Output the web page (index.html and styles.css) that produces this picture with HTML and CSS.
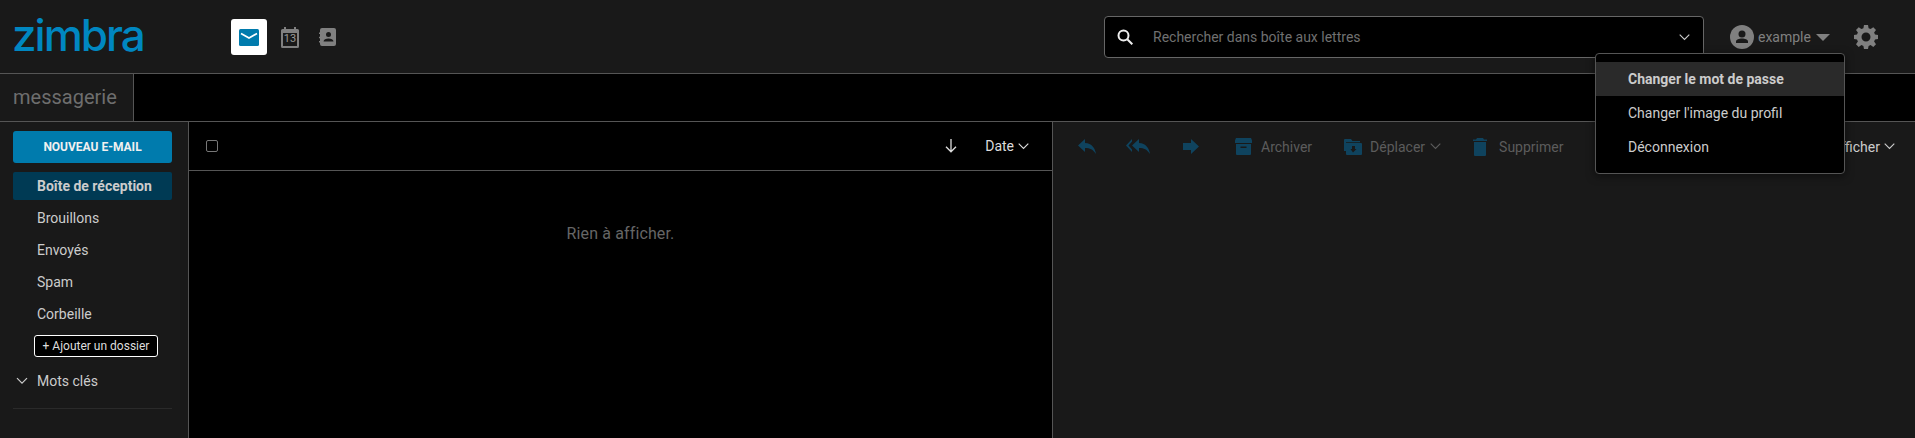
FILE: index.html
```html
<!DOCTYPE html>
<html lang="fr">
<head>
<meta charset="utf-8">
<title>Zimbra</title>
<link rel="stylesheet" href="styles.css">
</head>
<body>
<div class="app">
  <header class="topbar">
    <div class="logo">zimbra</div>
    <nav class="apps">
      <a class="app-btn active"><svg width="20" height="17" viewBox="0 0 20 17"><rect width="20" height="17" rx="1.500" fill="#007bad"/><path d="M2 4.500 10 9l8-4.500" fill="none" stroke="#fff" stroke-width="1.700"/></svg></a>
      <a class="app-btn cal"><svg width="18" height="21" viewBox="0 0 18 21"><path d="M3 0h2v2h8V0h2v2h1.500A1.500 1.500 0 0 1 18 3.500v16a1.500 1.500 0 0 1-1.500 1.500h-15A1.500 1.500 0 0 1 0 19.500v-16A1.500 1.500 0 0 1 1.500 2H3z" fill="#808080"/><rect x="2" y="6" width="14" height="13" fill="#191919"/></svg><span class="cal-num">13</span></a>
      <a class="app-btn contacts"><svg width="17" height="18" viewBox="0 0 17 18"><path d="M3 0h12a2 2 0 0 1 2 2v14a2 2 0 0 1-2 2H3a2 2 0 0 1-2-2v-1.500H0V13h1v-2.700H0V8.800h1V6H0V4.500h1V2a2 2 0 0 1 2-2z" fill="#808080"/><circle cx="9.500" cy="6.500" r="2.500" fill="#191919"/><path d="M4.500 13.500c0-2 2.500-3 5-3s5 1 5 3z" fill="#191919"/></svg></a>
    </nav>
    <div class="search">
      <svg class="search-ico" width="16" height="16" viewBox="0 0 16 16"><circle cx="6.500" cy="6.500" r="5" fill="none" stroke="#eee" stroke-width="2"/><path d="m10.300 10.300 5 5" stroke="#eee" stroke-width="2"/></svg>
      <span class="search-text">Rechercher dans boîte aux lettres</span>
      <svg class="chev-search" width="11" height="7" viewBox="0 0 11 7"><path d="m.7.700 4.800 4.800L10.300.7" fill="none" stroke="#ccc" stroke-width="1.100"/></svg>
    </div>
    <div class="user">
      <svg width="24" height="24" viewBox="0 0 24 24"><circle cx="12" cy="12" r="12" fill="#808080"/><circle cx="12" cy="9" r="3.500" fill="#191919"/><path d="M6 18v-1.500c0-2 3-3 6-3s6 1 6 3V18z" fill="#191919"/></svg>
      <span class="user-name">example</span>
      <span class="caret"></span>
    </div>
    <svg class="gear" width="24" height="24" viewBox="0 0 24 24"><path fill="#808080" fill-rule="evenodd" d="M10 0h4l.6 3.200 2 .8L19.300 2.200 22 4.900 20.100 7.500l.9 2L24 10v4l-3 .6-.9 2L22 19.300 19.300 22l-2.700-1.900-2 .9L14 24h-4l-.6-3-2-.9L4.700 22 2 19.300l1.900-2.700-.9-2L0 14v-4l3-.5.900-2L2 4.900 4.700 2.200 7.400 4l2-.8zM12 7.500a4.500 4.500 0 1 0 0 9 4.500 4.500 0 0 0 0-9z"/></svg>
  </header>

  <div class="subbar">
    <div class="tab">messagerie</div>
  </div>

  <main class="main">
    <aside class="sidebar">
      <button class="compose">NOUVEAU E-MAIL</button>
      <ul class="folders">
        <li class="folder selected">Boîte de réception</li>
        <li class="folder">Brouillons</li>
        <li class="folder">Envoyés</li>
        <li class="folder">Spam</li>
        <li class="folder">Corbeille</li>
      </ul>
      <button class="add-folder">+ Ajouter un dossier</button>
      <div class="tags">
        <svg width="12" height="8" viewBox="0 0 12 8"><path d="m1 1.200 5 5 5-5" fill="none" stroke="#ccc" stroke-width="1.200"/></svg>
        <span>Mots clés</span>
      </div>
      <div class="side-rule"></div>
    </aside>

    <section class="list">
      <div class="list-head">
        <span class="check"></span>
        <svg class="arrow-down" width="12" height="14" viewBox="0 0 12 14"><path d="M6 0v12.500M1 7.800l5 5 5-5" fill="none" stroke="#ddd" stroke-width="1.300"/></svg>
        <span class="sort">Date</span>
        <svg width="11" height="7" viewBox="0 0 11 7"><path d="m.7.700 4.800 4.800L10.300.7" fill="none" stroke="#ddd" stroke-width="1.100"/></svg>
      </div>
      <div class="empty">Rien à afficher.</div>
    </section>

    <section class="pane">
      <div class="toolbar">
        <svg class="tb-ico" width="18" height="15" viewBox="0 0 18 15"><path d="M7 0 0 6.500 7 13V9c5 0 8 1.500 11 6-1-6-4-10.500-11-11z"/></svg>
        <svg class="tb-ico second" width="24" height="15" viewBox="0 0 24 15"><path d="M6 0 0 6.500 6 13v-2.500L2.500 6.500 6 2.500z"/><path d="M13 0 6 6.500 13 13V9c5 0 8 1.500 11 6-1-6-4-10.500-11-11z"/></svg>
        <svg class="tb-ico third" width="16" height="15" viewBox="0 0 16 15"><path d="M8 0l8 7.500-8 7.500v-4H0V4h8z"/></svg>
        <svg class="tb-ico fourth" width="17" height="17" viewBox="0 0 17 17"><path d="M1 0h15l1 2.500V5H0V2.500zM1 6h15v10a1 1 0 0 1-1 1H2a1 1 0 0 1-1-1zm4.500 2.500V10h6V8.500z"/></svg>
        <span class="tb-text">Archiver</span>
        <svg class="tb-ico fifth" width="18" height="16" viewBox="0 0 18 16"><path d="M1 0h6l1.500 2H16v1.200H2V12H0V1a1 1 0 0 1 1-1zM2 4h15a1 1 0 0 1 1 1v10a1 1 0 0 1-1 1H3a1 1 0 0 1-1-1zm7 9.500 3.500-3.500H11V7H8v3H6.500z" fill-rule="evenodd"/></svg>
        <span class="tb-text narrow">Déplacer</span>
        <svg class="tb-chev" width="11" height="7" viewBox="0 0 11 7"><path d="m.7.700 4.800 4.800L10.300.7" fill="none" stroke="#5c5c5c" stroke-width="1.100"/></svg>
        <svg class="tb-ico sixth" width="14" height="18" viewBox="0 0 14 18"><path d="M4 0h6l1 1.500h3V3H0V1.500h3zM1 4h12v13a1 1 0 0 1-1 1H2a1 1 0 0 1-1-1z"/></svg>
        <span class="tb-text wide">Supprimer</span>
        <span class="spacer"></span>
        <span class="view">Afficher</span>
        <svg class="view-chev" width="11" height="7" viewBox="0 0 11 7"><path d="m.7.700 4.800 4.800L10.300.7" fill="none" stroke="#ccc" stroke-width="1.100"/></svg>
      </div>
    </section>
  </main>

  <div class="menu">
    <div class="menu-item hover">Changer le mot de passe</div>
    <div class="menu-item">Changer l'image du profil</div>
    <div class="menu-item">Déconnexion</div>
  </div>
</div>
</body>
</html>
```
FILE: styles.css
```css
* { box-sizing: border-box; }
html, body { margin: 0; height: 100%; }
body { background: #191919; font-family: Roboto, "Liberation Sans", sans-serif; color: #ccc; overflow: hidden; }
.app { position: relative; width: 1915px; height: 438px; display: flex; flex-direction: column; }

.topbar { height: 74px; flex: none; display: flex; align-items: center; border-bottom: 1px solid #555; background: #191919; padding-left: 12px; }
.logo { width: 219px; font-family: Inter, Lato, sans-serif; font-size: 44px; line-height: 50px; color: #0087c1; letter-spacing: -2px; font-weight: 500; margin-top: -3px; }
.apps { display: flex; align-items: center; width: 873px; margin-top: 1px; }
.app-btn { position: relative; width: 36px; height: 36px; display: flex; align-items: center; justify-content: center; margin-right: 5px; border-radius: 3px; }
.app-btn.active { background: #fff; }
.app-btn.contacts { margin-left: -4px; }
.cal-num { position: absolute; left: 0; right: 0; top: 13px; text-align: center; font-size: 11px; line-height: 13px; color: #999; }
.search { width: 600px; height: 42px; border: 1px solid #666; border-radius: 4px; background: #000; display: flex; align-items: center; padding: 0 13px 0 12px; margin-top: 1px; }
.search-ico { flex: none; margin-right: 20px; }
.search-text { flex: 1; font-size: 14px; color: #707070; }
.user { display: flex; align-items: center; margin-left: 26px; width: 124px; margin-top: 1px; }
.user-name { margin-left: 4px; font-size: 14px; color: #808080; }
.caret { margin-left: 5px; border: 7px solid transparent; border-top-color: #808080; border-bottom-width: 0; }
.gear { margin-top: 1px; }

.subbar { height: 48px; flex: none; background: #000; border-bottom: 1px solid #555; display: flex; }
.tab { width: 134px; background: #191919; border-right: 1px solid #555; padding-left: 13px; font-size: 20px; line-height: 46px; color: #6e6e6e; }

.main { flex: 1; display: flex; min-height: 0; }
.sidebar { width: 189px; flex: none; border-right: 1px solid #555; padding: 9px 16px 0 13px; }
.compose { display: block; width: 159px; height: 32px; background: #007bad; border: 0; border-radius: 3px; color: #f0f0f0; font: 700 12px Roboto, sans-serif; padding: 0; }
.folders { list-style: none; margin: 9px 0 0; padding: 0; }
.folder { height: 28px; margin-bottom: 4px; padding-left: 24px; font-size: 14px; line-height: 29px; color: #ccc; border-radius: 2px; }
.folder.selected { background: #003a54; font-weight: 700; }
.add-folder { display: block; margin: 7px 0 0 21px; width: 124px; height: 22px; background: #000; color: #ddd; border: 1px solid #fff; border-radius: 3px; font: 400 12px Roboto, sans-serif; padding: 0; }
.tags { display: flex; align-items: center; height: 28px; margin-top: 10px; font-size: 14px; color: #ccc; }
.tags svg { margin: 0 9px 0 3px; }
.side-rule { margin-top: 13px; border-top: 1px solid #2a2a2a; }

.list { width: 864px; flex: none; border-right: 1px solid #555; background: #000; }
.list-head { height: 49px; border-bottom: 1px solid #555; display: flex; align-items: center; padding: 0 23px 0 17px; }
.check { width: 12px; height: 12px; border: 1px solid #777; border-radius: 2px; margin-right: auto; margin-bottom: 1px; }
.arrow-down { margin-right: 28px; }
.sort { font-size: 14px; color: #ddd; margin-right: 4px; margin-bottom: 1px; }
.empty { margin-top: 53px; text-align: center; font-size: 16px; line-height: 19px; letter-spacing: .13px; color: #666; }

.pane { flex: 1; background: #191919; }
.toolbar { height: 49px; display: flex; align-items: center; padding: 0 20px 0 25px; }
.tb-ico { fill: #0f435e; flex: none; }
.tb-ico.second { margin-left: 30px; }
.tb-ico.third { margin-left: 33px; }
.tb-ico.fourth { margin-left: 36px; }
.tb-ico.fifth { margin-left: 32px; }
.tb-ico.sixth { margin-left: 32px; }
.tb-text { font-size: 14px; color: #5c5c5c; margin-left: 9px; }
.tb-text.narrow { margin-left: 8px; }
.tb-text.wide { margin-left: 12px; }
.tb-chev { margin-left: 5px; }
.spacer { flex: 1; }
.view { font-size: 14px; color: #ccc; }
.view-chev { margin-left: 4px; }

.menu { position: absolute; left: 1595px; top: 53px; width: 250px; height: 121px; background: #000; border: 1px solid #555; border-radius: 4px; padding-top: 8px; box-shadow: 0 2px 8px rgba(0,0,0,.5); }
.menu-item { height: 34px; padding-left: 32px; font-size: 14px; line-height: 35px; color: #ccc; }
.menu-item.hover { background: #2a2a2a; font-weight: 700; }
```
